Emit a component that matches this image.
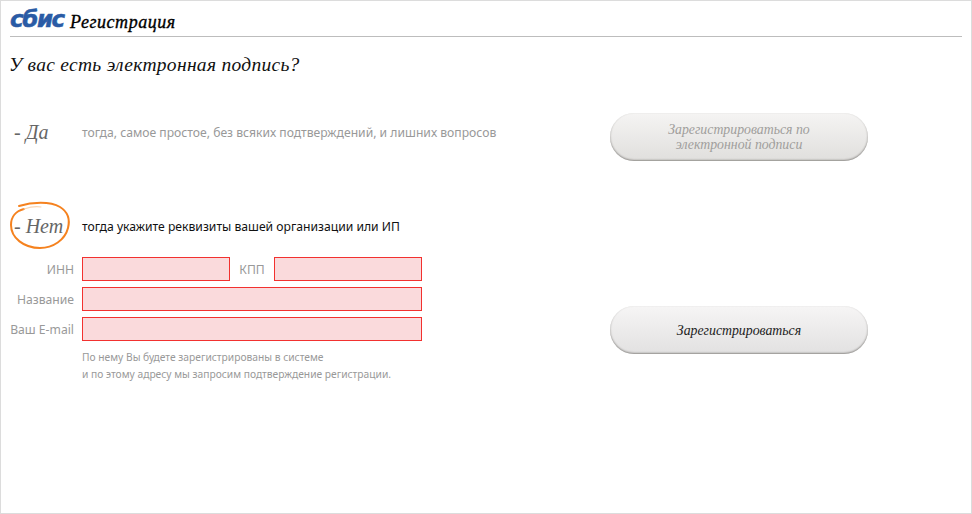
<style>
  :global(body) { margin: 0; background: #fff; }
  .page { width: 972px; height: 514px; box-sizing: border-box; border: 1px solid #dcdcdc; padding: 0 9px; font-family: "Noto Sans", sans-serif; overflow: hidden; }
  .head { display: flex; align-items: flex-end; height: 35px; border-bottom: 1px solid #bdbdbd; width: 952px; }
  .logo { font: italic 700 23px/28px "DejaVu Sans", sans-serif; -webkit-text-stroke: .5px #2a5ba5; color: #2a5ba5; letter-spacing: -1.4px; width: 60px; margin-bottom: 3px; white-space: nowrap; }
  .title { font: italic 400 18px/20px "Liberation Serif", serif; -webkit-text-stroke: .35px #000; letter-spacing: .55px; color: #000; margin-bottom: 4px; }
  h1 { margin: 16px 0 0 -1px; font: italic 400 19.5px/24px "Liberation Serif", serif; letter-spacing: .29px; color: #111; height: 24px; }
  .row { display: grid; grid-template-columns: 600px 258px; }
  .yes { margin-top: 36px; height: 48px; }
  .no { margin-top: 46px; }
  .line { display: flex; align-items: center; height: 38px; }
  .mark { width: 72px; flex: none; font: italic 400 20px/24px "Liberation Serif", serif; color: #666; padding-left: 4px; box-sizing: border-box; position: relative; white-space: nowrap; }
  .lead { font-size: 12.16px; color: #999; white-space: nowrap; }
  .lead.dark { color: #111; }
  .btn { width: 258px; height: 48px; box-sizing: border-box; border: 0; border-radius: 24px; background: linear-gradient(#f5f4f3, #e0dfdd); box-shadow: inset 0 -1px 2px #8f8d8a; font: italic 400 13.8px/15px "Liberation Serif", serif; color: #a09e9c; padding: 0 40px; }
  .btn.active { color: #222; background: linear-gradient(#f6f5f5, #e2e1e1); }
  .ring { position: absolute; left: 0; top: -12px; width: 62px; height: 48px; overflow: visible; }
  .fields { display: flex; flex-direction: column; gap: 6px; margin-top: 12px; }
  .f { display: flex; align-items: center; height: 24px; font-size: 12.16px; color: #999; }
  .f label { width: 64px; margin-right: 8px; text-align: right; white-space: nowrap; }
  .f input { display: block; height: 24px; box-sizing: border-box; border: 1px solid #f2312f; background: #fadadc; padding: 0; margin: 0; border-radius: 0; width: 340px; }
  .f input.s { width: 148px; }
  .f .k { width: 44px; margin: 0; text-align: center; }
  .note { margin: 8px 0 0 72px; font-size: 10.25px; line-height: 17px; color: #999; white-space: nowrap; }
  .right { padding-top: 99px; }
</style>

<div class="page">
  <div class="head">
    <div class="logo">сбис</div>
    <div class="title">Регистрация</div>
  </div>
  <h1>У вас есть электронная подпись?</h1>

  <div class="row yes">
    <div class="line">
      <div class="mark">- Да</div>
      <div class="lead">тогда, самое простое, без всяких подтверждений, и лишних вопросов</div>
    </div>
    <button class="btn">Зарегистрироваться по электронной подписи</button>
  </div>

  <div class="row no">
    <div>
      <div class="line">
        <div class="mark">- Нет
          <svg class="ring" viewBox="0 0 62 48" fill="none" stroke="#f5821f" stroke-linecap="round">
            <path d="M9 4 C22 0 40 -1 50 5 C58 10 60 18 58 26 C55 38 43 46 30 46 C14 46 1 36 1 23 C1 15 6 9 14 7" stroke-width="2"/>
            <path d="M14 7 C20 5 26 4 31 5" stroke="#fad6b4" stroke-width="1.2"/>
          </svg>
        </div>
        <div class="lead dark">тогда укажите реквизиты вашей организации или ИП</div>
      </div>
      <div class="fields">
        <div class="f"><label for="inn">ИНН</label><input id="inn" class="s" /><label class="k" for="kpp">КПП</label><input id="kpp" class="s" /></div>
        <div class="f"><label for="name">Название</label><input id="name" /></div>
        <div class="f"><label for="mail">Ваш E-mail</label><input id="mail" /></div>
      </div>
      <p class="note">По нему Вы будете зарегистрированы в системе<br />и по этому адресу мы запросим подтверждение регистрации.</p>
    </div>
    <div class="right"><button class="btn active">Зарегистрироваться</button></div>
  </div>
</div>
